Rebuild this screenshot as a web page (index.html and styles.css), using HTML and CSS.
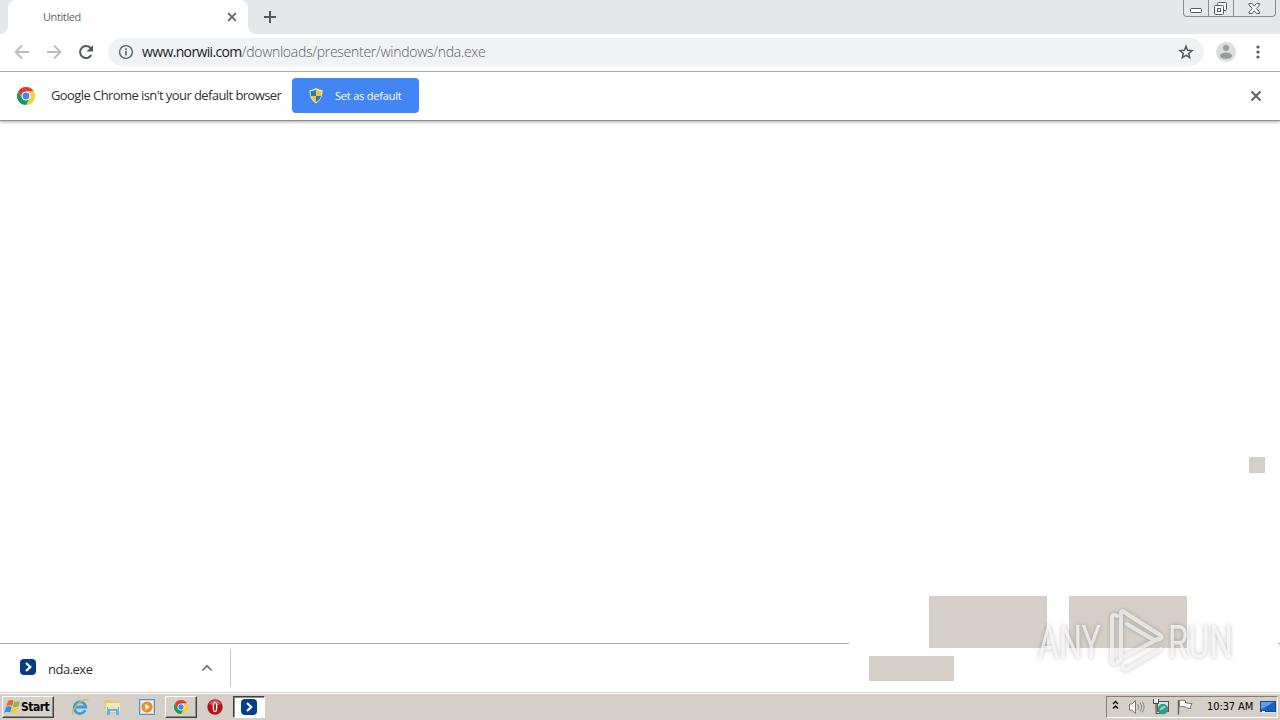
FILE: index.html
```html
<!DOCTYPE html>
<html lang="en">
<head>
    <meta charset="UTF-8">
    <meta name="viewport" content="width=device-width, initial-scale=1.0">
    <title>Untitled</title>
    <link rel="stylesheet" href="styles.css">
</head>
<body>

    <svg class="defs" width="0" height="0">
        <symbol id="chrome" viewBox="0 0 18 18">
            <path fill="#e33b2e" d="M1.2 4.5A9 9 0 0 1 16.8 4.5H9A4.5 4.5 0 0 0 5.1 11.2z"/>
            <path fill="#fbce3c" d="M16.8 4.5A9 9 0 0 1 9 18l3.9-6.75A4.5 4.5 0 0 0 9 4.5z"/>
            <path fill="#179b57" d="M9 18A9 9 0 0 1 1.2 4.5l3.9 6.75a4.5 4.5 0 0 0 7.8 0z"/>
            <circle cx="9" cy="9" r="4.3" fill="#fff"/>
            <circle cx="9" cy="9" r="3.4" fill="#4285f4"/>
        </symbol>
        <symbol id="norwii" viewBox="0 0 16 16">
            <rect width="16" height="16" rx="4" fill="#053d8b"/>
            <path d="M6 4l4.3 4L6 12" fill="none" stroke="#fff" stroke-width="2.2"/>
        </symbol>
    </svg>

    <div class="tabstrip">
        <div class="tab-edge"></div>
        <div class="tab">
            <span class="tab-title">Untitled</span>
            <svg class="tab-close" width="10" height="10" viewBox="0 0 10 10"><path d="M1.2 1.2l7.6 7.6M8.8 1.2L1.2 8.8"/></svg>
        </div>
        <div class="tab-edge right"></div>
        <svg class="new-tab" width="14" height="14" viewBox="0 0 14 14"><path d="M7 1v12M1 7h12"/></svg>
        <div class="window-buttons">
            <div class="min"><svg width="13" height="6" viewBox="0 0 13 6"><rect x=".5" y=".5" width="11" height="4" rx="1.2"/></svg></div>
            <div class="max"><svg width="13" height="13" viewBox="0 0 13 13"><path d="M3.500 3.500v-2q0-1 1-1h7q1 0 1 1v6q0 1-1 1h-2"/><rect x=".5" y="3.500" width="9" height="9" rx="1"/><rect x="3.500" y="6.500" width="3" height="3"/></svg></div>
            <div class="close"><svg width="13" height="12" viewBox="0 0 13 12"><path d="M1 .5h3l2.300 2.700L8.600.5h3v1.500L8.400 5.500l3.200 3.500v1.500h-3L6.300 7.800 4 10.500H1V9l3.200-3.500L1 2z"/></svg></div>
        </div>
    </div>

    <div class="toolbar">
        <svg class="nav" width="16" height="16" viewBox="0 0 16 16"><path d="M15 8H2M8 1.500L1.500 8 8 14.500"/></svg>
        <svg class="nav" width="16" height="16" viewBox="0 0 16 16"><path d="M1 8h13M8 1.500L14.500 8 8 14.500"/></svg>
        <svg class="reload" width="16" height="16" viewBox="0 0 16 16"><path d="M13.300 11A6 6 0 1 1 12.500 4" fill="none" stroke="#555a5f" stroke-width="2"/><path d="M15 1v6.500H8.500z" fill="#555a5f"/></svg>
        <div class="omnibox">
            <svg class="info" width="16" height="16" viewBox="0 0 16 16"><circle cx="8" cy="8" r="6.400" fill="none" stroke="#5f6368" stroke-width="1.400"/><path d="M8 7v4.500M8 4.300V6" stroke="#5f6368" stroke-width="1.600"/></svg>
            <span class="url"><span class="host">www.norwii.com</span><span class="path">/downloads/presenter/windows/nda.exe</span></span>
            <svg class="star" width="16" height="16" viewBox="0 0 16 16"><path d="M8 2.200l1.700 4 4.300.4-3.300 2.800 1 4.200L8 11.400l-3.700 2.200 1-4.200L2 6.600l4.300-.4z"/></svg>
        </div>
        <svg class="avatar" width="20" height="20" viewBox="0 0 20 20"><circle cx="10" cy="10" r="10" fill="#dcdddf"/><circle cx="10" cy="6" r="3" fill="#9a9c9f"/><ellipse cx="10" cy="13.700" rx="6" ry="3.200" fill="#9a9c9f"/></svg>
        <svg class="menu" width="4" height="14" viewBox="0 0 4 14"><circle cx="2" cy="2" r="1.600"/><circle cx="2" cy="7" r="1.600"/><circle cx="2" cy="12" r="1.600"/></svg>
    </div>

    <div class="infobar">
        <svg width="18" height="18"><use href="#chrome"/></svg>
        <span class="message">Google Chrome isn't your default browser</span>
        <button class="default-btn">
            <svg width="14" height="16" viewBox="0 0 14 16">
                <path fill="#fff0a8" d="M7 0q3 2 6.500 2.300Q14 11 7 15.500 0 11 .5 2.300 4 2 7 0z"/>
                <path fill="#2878c8" d="M7 1.500V8H2Q1.400 5.500 1.600 3.300 4.500 3 7 1.500zM7 8h5q-1 4-5 6.300z"/>
                <path fill="#f5c72e" d="M7 1.500V8h5q.6-2.500.4-4.700Q9.500 3 7 1.500zM7 8H2q1 4 5 6.300z"/>
            </svg>
            <span>Set as default</span>
        </button>
        <svg class="dismiss" width="12" height="12" viewBox="0 0 12 12"><path d="M1.500 1.500l9 9M10.500 1.500l-9 9"/></svg>
    </div>

    <div class="page"></div>

    <div class="downloads">
        <div class="download-item">
            <svg class="file-icon" width="16" height="16"><use href="#norwii"/></svg>
            <span class="file-name">nda.exe</span>
            <svg class="chevron" width="12" height="8" viewBox="0 0 12 8"><path d="M1.300 6.500L6 1.800l4.700 4.700"/></svg>
        </div>
    </div>

    <div class="taskbar">
        <div class="start">
            <svg width="17" height="16" viewBox="0 0 17 16">
                <path fill="#e8622c" d="M4 2q3-2 5.500-.3L8 7Q5.500 5.500 2.300 7z"/>
                <path fill="#8cbc3c" d="M10.300 2.200Q13 3.500 16 2l-1.600 5.300Q11.500 8.800 8.800 7.400z"/>
                <path fill="#3d8fd6" d="M2 8q3-1.500 5.700 0l-1.600 5.200Q3.500 12 .4 13.400z"/>
                <path fill="#f9c938" d="M8.500 8.400q2.700 1.300 5.600 0l-1.600 5.300Q9.600 15 7 13.600z"/>
            </svg>
            <span>Start</span>
        </div>
        <div class="launch ie">
            <svg width="18" height="18" viewBox="0 0 18 18">
                <path d="M14.300 12.200A5.800 5.800 0 1 1 14.800 9H4.500" fill="none" stroke="#36a3e0" stroke-width="2.800"/>
                <path d="M2.500 16.500C-1 15 5 5.500 13 2q4-1.500 4 1.300" fill="none" stroke="#e2b43c" stroke-width="1.300"/>
            </svg>
        </div>
        <div class="launch folder">
            <svg width="17" height="16" viewBox="0 0 17 16">
                <path fill="#e9c865" d="M1 1h5l1 1.500h8V14H1z"/>
                <path fill="#fbeaa5" d="M2 4h14v9H2z"/>
                <path fill="#61b4e4" d="M3 8h12v8h-3v-4H6v4H3z"/>
                <path fill="#c5e9fa" d="M4 8h10v2H4z"/>
            </svg>
        </div>
        <div class="launch media">
            <svg width="16" height="16" viewBox="0 0 16 16">
                <rect x=".5" y=".5" width="15" height="15" fill="#b7d8ef" stroke="#5793c3"/>
                <rect x="2" y="2" width="12" height="12" fill="#e6f3fb"/>
                <circle cx="8" cy="8" r="5.600" fill="#f28a1c"/>
                <path d="M6.300 4.800L11 8l-4.700 3.200z" fill="#fff"/>
            </svg>
        </div>
        <div class="task"><svg width="14" height="14"><use href="#chrome"/></svg></div>
        <div class="launch opera">
            <svg width="16" height="16" viewBox="0 0 16 16">
                <circle cx="8" cy="8" r="7.700" fill="#b5121b"/>
                <path d="M2 5a6.500 6.500 0 0 1 12 0q-6 3-12 0z" fill="#d95055"/>
                <ellipse cx="8" cy="8" rx="2.300" ry="5.300" fill="#fff"/>
                <ellipse cx="8" cy="8" rx=".9" ry="4.300" fill="#8c0c14"/>
            </svg>
        </div>
        <div class="task active"><svg width="16" height="16"><use href="#norwii"/></svg></div>

        <div class="tray">
            <svg class="expand" width="7" height="10" viewBox="0 0 7 10"><path d="M1 4l2.500-2.500L6 4M1 8.500L3.500 6 6 8.500"/></svg>
            <svg class="volume" width="17" height="16" viewBox="0 0 17 16">
                <path d="M1.500 5h2.300L7.500 1.500v13L3.800 11H1.500z" fill="#fff" stroke="#777"/>
                <path d="M9.800 5.200q2 2.800 0 5.600M12 3.500q3.300 4.500 0 9M14.200 2.500q3.800 5.500 0 11" fill="none" stroke="#858585"/>
            </svg>
            <svg class="network" width="17" height="16" viewBox="0 0 17 16">
                <rect x="4.500" y="2.500" width="11" height="10" fill="#d8e8ec" stroke="#555"/>
                <path d="M.5 0v4.500h5V0M3 5v9.500h9" fill="none" stroke="#444"/>
                <path d="M1 0h1.500v4H1zM3.500 0H5v4H3.500z" fill="#fff"/>
                <circle cx="10" cy="10" r="5.200" fill="#2f9d8a"/>
                <path d="M6.500 10.500Q8 6.500 12.500 7 12 10.500 7 11.500z" fill="#83d2bd"/>
            </svg>
            <svg class="flag" width="17" height="16" viewBox="0 0 17 16">
                <path d="M1.500 1v14.500" stroke="#666" stroke-width="1.500"/>
                <path d="M2.500 1.500q3-1 6 .5v2l6.500.5-1.500 3 .5 2q-4 0-5.500-1.500-3-1.300-6 0z" fill="#fff" stroke="#777"/>
            </svg>
            <span class="clock">10:37 AM</span>
            <svg class="desktop" width="16" height="14" viewBox="0 0 16 14">
                <rect x=".5" y="1.500" width="15" height="10" fill="#1760c6" stroke="#24477e"/>
                <path d="M1 2h13L2 9H1z" fill="#5c9fe9"/>
                <path d="M1 12.500h14" stroke="#d9e6f2"/>
                <path d="M2 11.500h3" stroke="#fff"/>
            </svg>
        </div>
    </div>

    <!-- half painted dialog on top of the browser -->
    <div class="dialog">
        <div class="block corner"></div>
        <div class="block first"></div>
        <div class="block second"></div>
        <div class="block small"></div>
    </div>

    <svg class="watermark" width="230" height="76" viewBox="0 0 230 76">
        <g class="letters">
            <text x="8" y="56" textLength="63" lengthAdjust="spacingAndGlyphs">ANY</text>
            <text x="138" y="56" textLength="65" lengthAdjust="spacingAndGlyphs">RUN</text>
        </g>
        <g class="logo">
            <path d="M87 14q-5-3-5 2v43q0 4 4 2l4-3"/>
            <path d="M97 22l27 16 6-1q3-2 0-4L94 10q-3-2-3 2v44l39-20M93 65q0 4 4 2l34-20"/>
        </g>
    </svg>

</body>
</html>
```

FILE: styles.css
```css
* {
    margin: 0;
    padding: 0;
    box-sizing: border-box;
}

body {
    display: flex;
    flex-direction: column;
    width: 1280px;
    height: 720px;
    overflow: hidden;
    background: #fff;
    font-family: 'Open Sans', 'Noto Sans', sans-serif;
    color: #333;
}

svg {
    display: block;
    flex: none;
}

span {
    white-space: nowrap;
}

.defs {
    position: absolute;
}

/* tabs */
.tabstrip {
    display: flex;
    height: 34px;
    background: #fff;
}

.tab-edge {
    width: 8px;
    background: #e4e8eb;
    border-bottom-right-radius: 8px;
}

.tab-edge.right {
    border-radius: 0 0 0 8px;
}

.tab {
    display: flex;
    align-items: center;
    width: 240px;
    padding: 0 11px 0 35px;
    background: linear-gradient(#e4e8eb, #e4e8eb) 0 0 / 100% 8px no-repeat;
    position: relative;
    z-index: 0;
}

.tab::before {
    content: '';
    position: absolute;
    inset: 0;
    z-index: -1;
    background: #fff;
    border-radius: 8px 8px 0 0;
}

.tab-title {
    flex: 1;
    padding-bottom: 2px;
    font-size: 11px;
    letter-spacing: -0.4px;
    color: #5f6368;
}

.tab-close path {
    stroke: #5f6368;
    stroke-width: 1.7;
}

.new-tab {
    width: 28px;
    height: 34px;
    padding: 10px 7px;
    background: #e4e8eb;
}

.new-tab path {
    stroke: #55595d;
    stroke-width: 2;
}

.window-buttons {
    display: flex;
    flex: 1;
    justify-content: flex-end;
    padding-right: 4px;
    background: #e4e8eb;
}

.window-buttons div {
    display: flex;
    justify-content: center;
    height: 17px;
    border: 1px solid #888e95;
    border-top: none;
    border-left: none;
}

.window-buttons svg {
    fill: #fff;
    stroke: #555c66;
}

.window-buttons .min {
    width: 26px;
    padding-top: 8px;
    border-left: 1px solid #888e95;
    border-bottom-left-radius: 4px;
}

.window-buttons .max {
    width: 25px;
    padding: 2px 1px 0 0;
}

.window-buttons .close {
    width: 42px;
    padding-top: 3px;
    border-bottom-right-radius: 4px;
}

/* address row */
.toolbar {
    display: flex;
    align-items: center;
    height: 38px;
    padding: 0 20px 2px 14px;
    border-bottom: 1px solid #adafb2;
}

.nav {
    margin-right: 16px;
    fill: none;
    stroke: #b9bbbd;
    stroke-width: 1.8;
}

.omnibox {
    display: flex;
    align-items: center;
    width: 1096px;
    height: 28px;
    margin-left: 14px;
    padding: 0 10px;
    border-radius: 14px;
    background: #f0f3f5;
}

.url {
    flex: 1;
    margin-left: 8px;
    font-size: 14px;
}

.host {
    color: #202124;
    letter-spacing: -0.64px;
}

.path {
    color: #5d6165;
    font-weight: 300;
    letter-spacing: -0.28px;
}

.star {
    fill: none;
    stroke: #555a5f;
    stroke-width: 1.5;
}

.avatar {
    margin-left: 12px;
}

.menu {
    margin-left: 20px;
    fill: #55595d;
}

/* default browser bar */
.infobar {
    display: flex;
    align-items: center;
    height: 49px;
    padding: 0 18px 1px 17px;
    border-bottom: 1px solid #8e8e8e;
    box-shadow: 0 1px 3px #aaa;
}

.message {
    width: 241px;
    margin-left: 16px;
    padding-bottom: 2px;
    font-size: 13px;
    letter-spacing: -0.58px;
    color: #333;
}

.default-btn {
    display: flex;
    align-items: center;
    width: 127px;
    height: 35px;
    padding-left: 17px;
    border: none;
    border-radius: 4px;
    background: #4285f4;
    color: #fff;
    font-family: inherit;
    font-size: 11px;
}

.default-btn span {
    margin-left: 12px;
    padding-bottom: 1px;
    letter-spacing: -0.2px;
}

.dismiss {
    margin-left: auto;
}

.dismiss path {
    stroke: #5f6368;
    stroke-width: 2;
}

.page {
    flex: 1;
}

/* downloads shelf */
.downloads {
    height: 49px;
    padding-top: 5px;
    border-top: 1px solid #ababab;
}

.download-item {
    display: flex;
    width: 231px;
    height: 38px;
    padding: 10px 17px 0 20px;
    border-right: 1px solid #c5c5c5;
}

.file-name {
    flex: 1;
    margin-left: 12px;
    font-size: 13px;
    line-height: 20px;
    letter-spacing: -0.5px;
}

.chevron {
    margin-top: 5px;
    fill: none;
    stroke: #777;
    stroke-width: 1.7;
}

/* taskbar */
.taskbar {
    display: flex;
    align-items: center;
    height: 28px;
    padding: 2px 2px 2px;
    border-top: 1px solid #d4d0c8;
    box-shadow: inset 0 1px #fff;
    background: #d5cfc7;
}

.start,
.task {
    display: flex;
    align-items: center;
    height: 22px;
    border: 1px solid;
    border-color: #fff #404040 #404040 #fff;
    box-shadow: inset -1px -1px #908c85;
}

.start {
    width: 52px;
    padding-left: 1px;
    font: bold 12px 'DejaVu Sans Condensed', sans-serif;
    letter-spacing: -0.5px;
    color: #000;
}

.launch {
    display: flex;
    justify-content: center;
}

.ie {
    width: 18px;
    margin-left: 17px;
}

.folder {
    width: 17px;
    margin-left: 15px;
}

.media {
    width: 16px;
    margin-left: 18px;
}

.opera {
    width: 16px;
    margin: 0 10px;
}

.task {
    justify-content: center;
    width: 32px;
}

.media + .task {
    margin-left: 10px;
}

.task.active {
    border-color: #404040 #fff #fff #404040;
    box-shadow: inset 1px 1px #908c85;
    background: #fff;
}

.tray {
    display: flex;
    align-items: center;
    width: 172px;
    height: 22px;
    margin-left: auto;
    padding: 0 1px 0 5px;
    border: 1px solid;
    border-color: #85817a #fff #fff #85817a;
}

.expand {
    margin-bottom: 3px;
    fill: none;
    stroke: #000;
    stroke-width: 1.4;
}

.volume {
    margin-left: 9px;
}

.network {
    margin-left: 8px;
}

.flag {
    margin-left: 7px;
}

.clock {
    width: 54px;
    margin-left: 13px;
    font: 11px 'DejaVu Sans Condensed', sans-serif;
    letter-spacing: -0.1px;
    color: #000;
}

.desktop {
    margin-left: auto;
}

/* overlays */
.dialog {
    position: absolute;
    left: 849px;
    top: 440px;
    width: 429px;
    height: 250px;
    background: #fff;
}

.block {
    position: absolute;
    background: #d5cfc8;
}

.corner {
    left: 400px;
    top: 17px;
    width: 16px;
    height: 16px;
}

.first,
.second {
    top: 156px;
    width: 118px;
    height: 52px;
}

.first {
    left: 80px;
}

.second {
    left: 220px;
}

.small {
    left: 20px;
    top: 216px;
    width: 85px;
    height: 25px;
}

.watermark {
    position: absolute;
    left: 1030px;
    top: 602px;
    filter: drop-shadow(0 0 2px rgba(0, 0, 0, 0.35));
}

.letters {
    font: 47px 'Roboto', sans-serif;
    fill: #fff;
    fill-opacity: 0.7;
}

.logo {
    fill: none;
    stroke: #fff;
    stroke-opacity: 0.65;
    stroke-width: 4;
    stroke-linejoin: round;
    stroke-linecap: round;
}
```
